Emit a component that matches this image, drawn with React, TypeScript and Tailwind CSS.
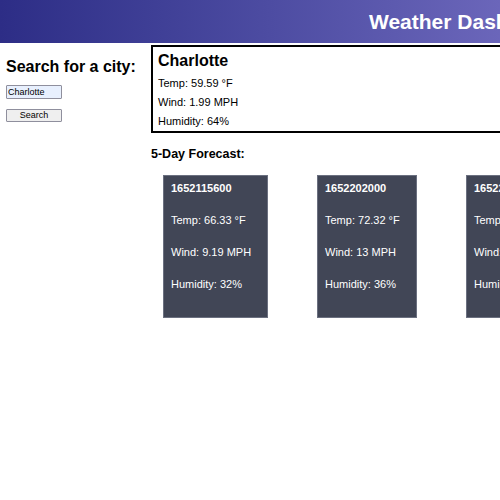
import React from "react";

const forecast = [
  { date: "1652115600", temp: "66.33", wind: "9.19", humidity: "32", w: "w-[105px]" },
  { date: "1652202000", temp: "72.32", wind: "13", humidity: "36", w: "w-[100px]" },
  { date: "1652288400", temp: "74.1", wind: "8.4", humidity: "41", w: "w-[105px]" },
];

export default function App() {
  return (
    <div className="w-[500px] h-[500px] overflow-hidden bg-white text-black font-['Liberation_Sans',Arial,sans-serif]">
      {/* Header */}
      <header className="h-[43px] bg-gradient-to-r from-[#2d2d86] to-[#6b66ba] flex items-center pl-[369px] whitespace-nowrap">
        <h1 className="text-[21px] font-bold text-white leading-none">Weather Dashboard</h1>
      </header>

      <div className="flex">
        {/* Search */}
        <aside className="w-[151px] shrink-0 pl-[6px] pt-[14px]">
          <h2 className="text-[16px] font-bold leading-[19px]">Search for a city:</h2>
          <input
            className="mt-[9px] block w-[56px] h-[14px] px-[1px] text-[9px] leading-none bg-[#e8f0fe] border border-[#8f8f9d] rounded-[1px] outline-none"
            defaultValue="Charlotte"
          />
          <button className="mt-[10px] block w-[56px] h-[13px] text-[9px] leading-none bg-[#efefef] border border-[#8f8f9d] rounded-[1px]">
            Search
          </button>
        </aside>

        {/* Current + forecast */}
        <main className="flex-1 pt-[2px] whitespace-nowrap">
          <section className="w-[400px] h-[88px] border-2 border-black pl-[5px] pt-[5px]">
            <h3 className="text-[16px] font-bold leading-[18px]">Charlotte</h3>
            <p className="text-[11px] leading-[19px] mt-[4px]">Temp: 59.59 °F</p>
            <p className="text-[11px] leading-[19px]">Wind: 1.99 MPH</p>
            <p className="text-[11px] leading-[19px]">Humidity: 64%</p>
          </section>

          <h3 className="mt-[14px] text-[12.5px] font-bold leading-[15px]">5-Day Forecast:</h3>

          <div className="flex gap-[49px] pl-[12px] mt-[13px]">
            {forecast.map((day) => (
              <div
                key={day.date}
                className={`${day.w} h-[143px] shrink-0 bg-[#414656] border border-[#6b7080] text-white text-[11px] leading-[13px] pl-[7px] pt-[6px]`}
              >
                <p className="font-bold">{day.date}</p>
                <p className="mt-[19px]">Temp: {day.temp} °F</p>
                <p className="mt-[19px]">Wind: {day.wind} MPH</p>
                <p className="mt-[19px]">Humidity: {day.humidity}%</p>
              </div>
            ))}
          </div>
        </main>
      </div>
    </div>
  );
}
